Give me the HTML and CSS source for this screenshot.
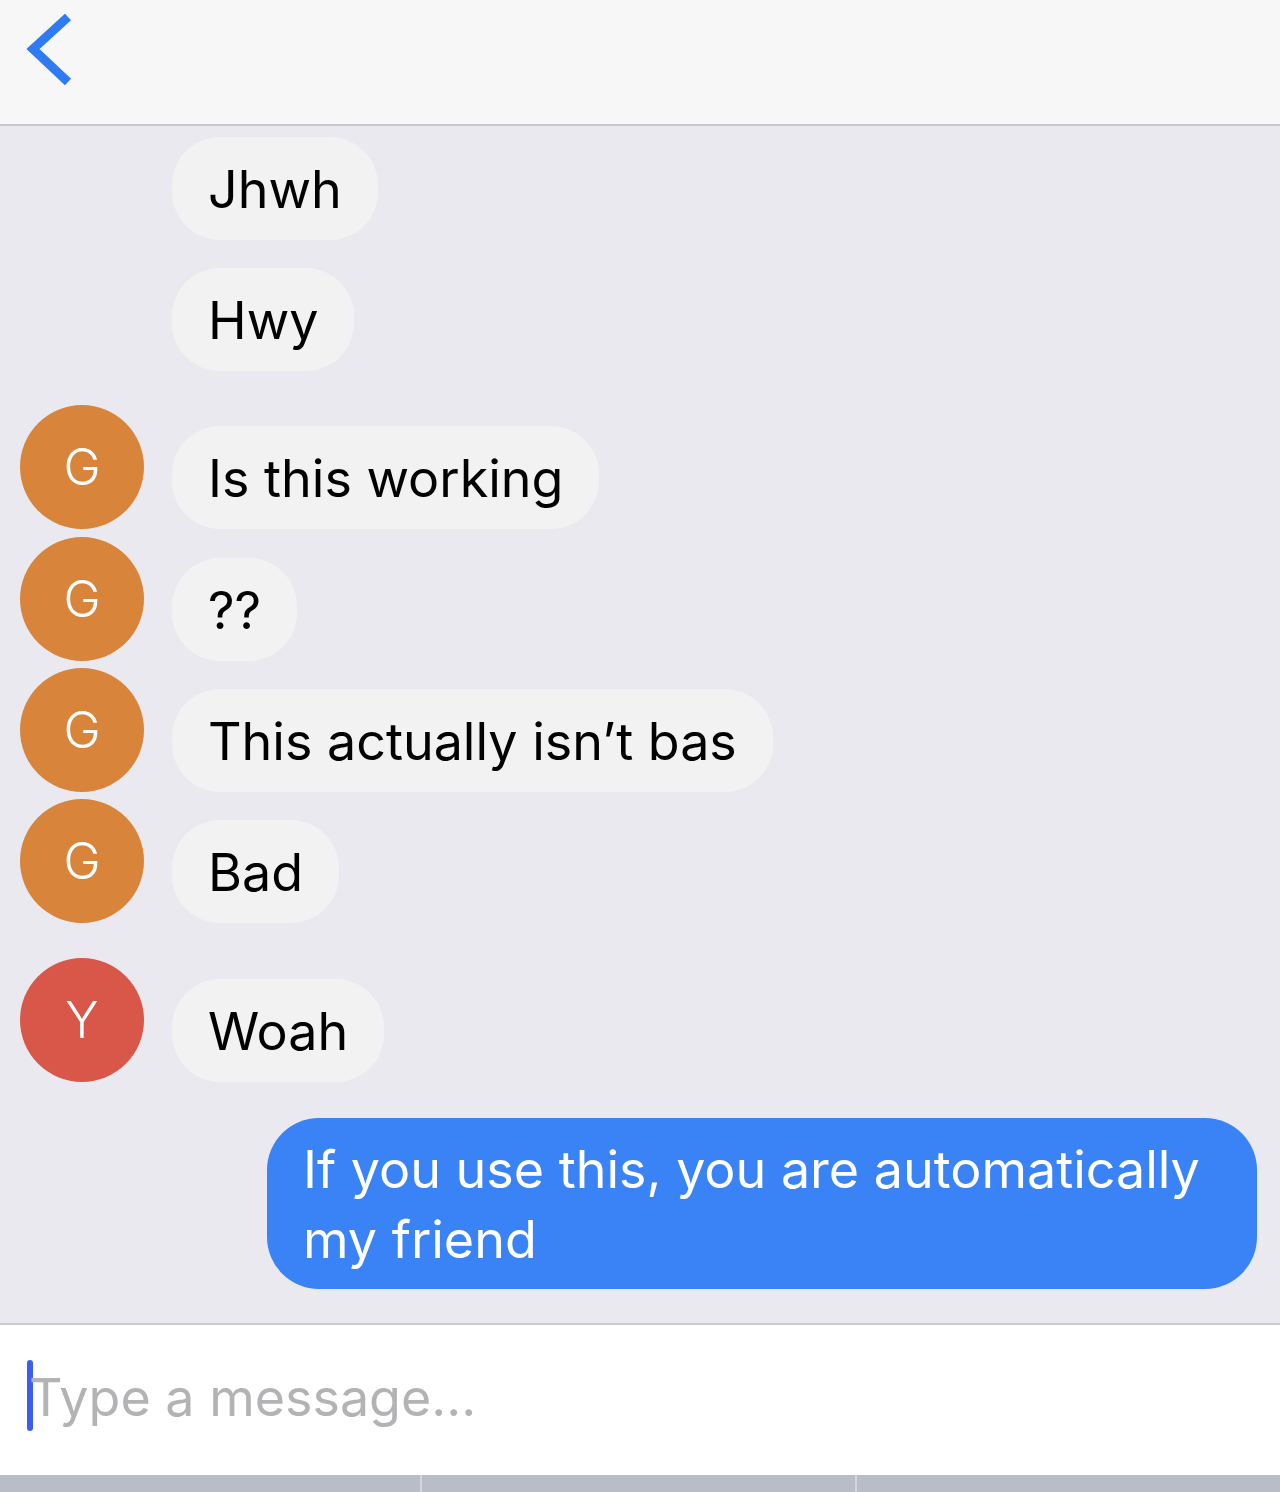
FILE: index.html
```html
<!DOCTYPE html>
<html>
<head>
<meta charset="utf-8">
<link rel="stylesheet" href="styles.css">
</head>
<body>
<div class="screen">
  <header class="topbar">
    <svg class="back" width="60" height="80" viewBox="0 0 60 80">
      <polyline points="44,3 9,35 44,68" fill="none" stroke="#2f7bf3" stroke-width="9" stroke-linejoin="miter"/>
    </svg>
  </header>
  <main class="chat">
    <div class="msg solo first"><div class="bubble">Jhwh</div></div>
    <div class="msg solo second"><div class="bubble">Hwy</div></div>
    <div class="msg row g1"><div class="avatar orange">G</div><div class="bubble">Is this working</div></div>
    <div class="msg row g2"><div class="avatar orange">G</div><div class="bubble">??</div></div>
    <div class="msg row"><div class="avatar orange">G</div><div class="bubble">This actually isn’t bas</div></div>
    <div class="msg row"><div class="avatar orange">G</div><div class="bubble">Bad</div></div>
    <div class="msg row sep"><div class="avatar red">Y</div><div class="bubble">Woah</div></div>
    <div class="msg mine"><div class="bubble blue">If you use this, you are automatically my friend</div></div>
  </main>
  <footer class="composer">
    <div class="input"><span class="caret"></span><span class="placeholder">Type a message...</span></div>
  </footer>
  <div class="keys">
    <div class="key"></div><div class="key"></div><div class="key"></div>
  </div>
</div>
</body>
</html>
```
FILE: styles.css
```css
* { box-sizing: border-box; }
html, body { margin: 0; padding: 0; }
body {
  width: 1280px;
  height: 1492px;
  overflow: hidden;
  font-family: Inter, "Noto Sans", "Liberation Sans", sans-serif;
  background: #eae9ef;
}
.screen {
  display: flex;
  flex-direction: column;
  height: 1492px;
}
.topbar {
  height: 126px;
  flex: none;
  background: #f7f7f7;
  border-bottom: 2px solid #c8c8ca;
  padding: 14px 0 0 24px;
}
.back { display: block; }
.chat {
  flex: none;
  height: 1197px;
  background: #eae9ef;
  display: flex;
  flex-direction: column;
  padding: 11px 23px 0 20px;
}
.msg {
  display: flex;
  align-items: flex-end;
  gap: 28px;
}
.solo { padding-left: 152px; }
.second { margin-top: 28px; }
.row { margin-top: 7px; }
.row.g1 { margin-top: 34px; }
.row.g2 { margin-top: 8px; }
.row.sep { margin-top: 35px; }
.mine { justify-content: flex-end; margin-top: 36px; }
.avatar {
  width: 124px;
  height: 124px;
  flex: none;
  border-radius: 50%;
  color: #fff;
  font-size: 50px;
  font-weight: 300;
  display: flex;
  align-items: center;
  justify-content: center;
  line-height: 1;
}
.orange { background: #d8853b; }
.red { background: #d95749; }
.bubble {
  background: #f2f2f3;
  color: #000;
  font-size: 52px;
  line-height: 70px;
  padding: 18px 36px 15px;
  border-radius: 48px;
  letter-spacing: 0;
}
.bubble.blue {
  background: #3a83f6;
  color: #fff;
  max-width: 990px;
  width: 990px;
  padding: 17px 36px 14px;
  border-radius: 52px;
}
.composer {
  flex: none;
  height: 152px;
  background: #fff;
  border-top: 2px solid #cbcbcd;
  display: flex;
  align-items: center;
  padding: 0 0 10px 27px;
}
.input {
  display: flex;
  align-items: center;
  height: 72px;
}
.caret {
  width: 6px;
  height: 71px;
  border-radius: 3px;
  background: #3b5ef0;
  flex: none;
}
.placeholder {
  font-size: 52px;
  line-height: 72px;
  color: #b3b3b5;
  margin-left: -4px;
  position: relative;
  top: 3px;
}
.keys {
  flex: 1;
  display: flex;
  gap: 2px;
  background: #d3d6dc;
}
.key { background: #b8bdc7; }
.key:nth-child(1) { width: 420px; }
.key:nth-child(2) { width: 433px; }
.key:nth-child(3) { flex: 1; }
```
